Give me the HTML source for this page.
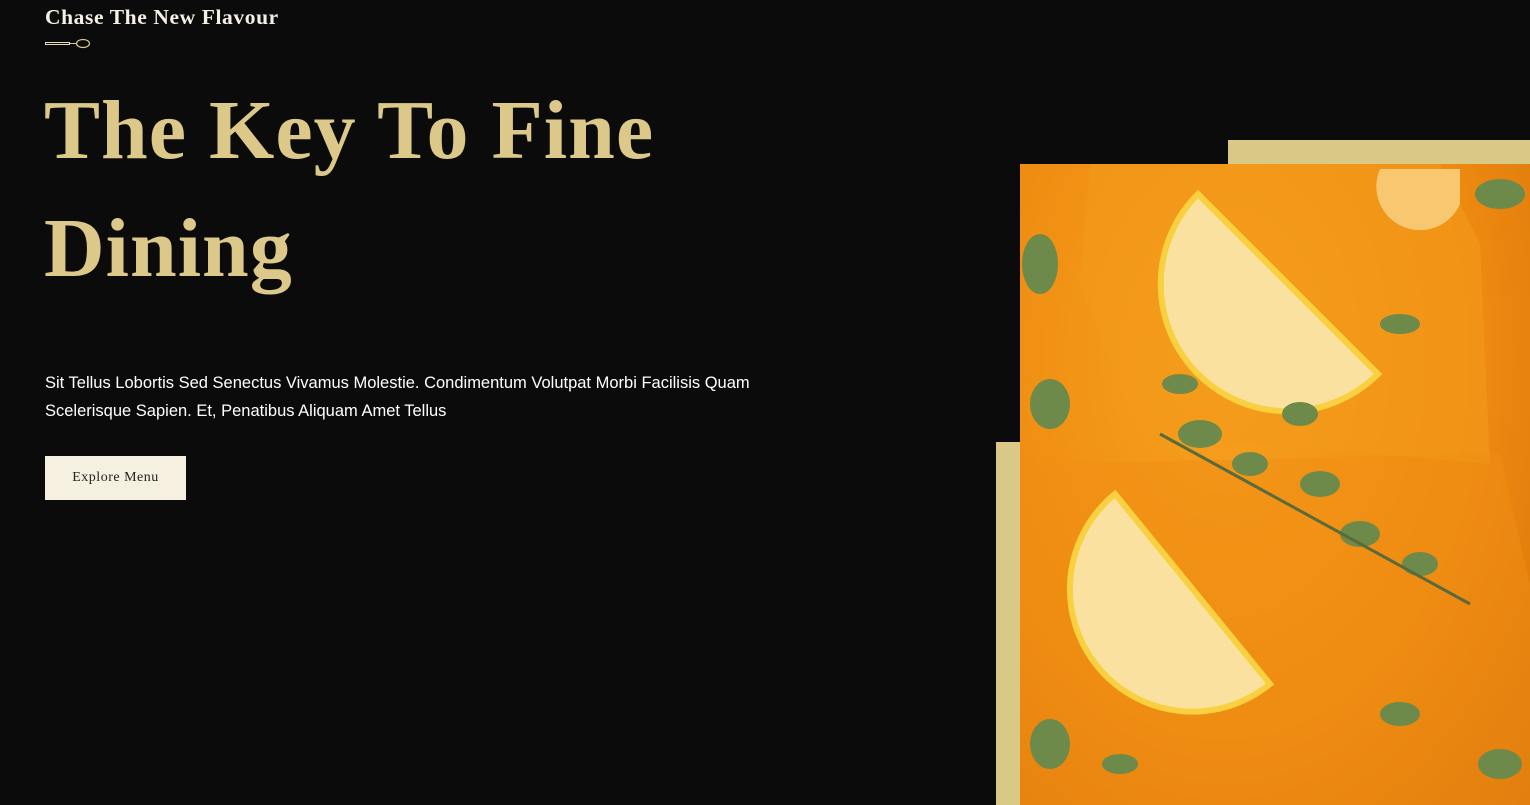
<!DOCTYPE html>
<html><head><meta charset="utf-8"><style>
*{margin:0;padding:0;box-sizing:border-box}
body{width:1530px;height:805px;background:#0b0b0b;overflow:hidden;position:relative;font-family:"Liberation Sans",sans-serif}
.sub{position:absolute;left:45px;top:5px;color:#f4f0e6;font-family:"Liberation Serif",serif;font-weight:bold;font-size:21.5px;letter-spacing:0.6px}
h1{position:absolute;left:44px;top:72px;color:#dcc98a;font-family:"Liberation Serif",serif;font-weight:bold;font-size:84px;line-height:118px;letter-spacing:1px}
p{position:absolute;left:45px;top:369px;width:790px;color:#fff;font-size:16.5px;line-height:28px}
.btn{position:absolute;left:45px;top:456px;width:141px;height:44px;background:#f6f0e0;color:#222;font-family:"Liberation Serif",serif;font-size:14px;text-align:center;line-height:44px;letter-spacing:0.5px}
.bar1{position:absolute;left:1228px;top:140px;width:302px;height:24px;background:#d9c886}
.bar2{position:absolute;left:996px;top:442px;width:24px;height:363px;background:#d9c886}
.img{position:absolute;left:1020px;top:164px;width:510px;height:641px;overflow:hidden;background:radial-gradient(ellipse at 40% 30%,#f7a21f,#ee8a10 60%,#d4700a)}
</style></head><body>
<div class="sub">Chase The New Flavour</div>
<svg style="position:absolute;left:45px;top:38px" width="46" height="12"><rect x="0.5" y="4.5" width="24" height="2" fill="none" stroke="#e6dcc0" stroke-width="1"/><line x1="25" y1="5.5" x2="31" y2="5.5" stroke="#d9c886"/><ellipse cx="38" cy="5.5" rx="6.5" ry="4" fill="none" stroke="#d9c886" stroke-width="1.2"/></svg>
<h1>The Key To Fine<br>Dining</h1>
<p>Sit Tellus Lobortis Sed Senectus Vivamus Molestie. Condimentum Volutpat Morbi Facilisis Quam Scelerisque Sapien. Et, Penatibus Aliquam Amet Tellus</p>
<div class="btn">Explore Menu</div>
<div class="bar1"></div><div class="bar2"></div>
<div class="img">
<svg width="510" height="641">
<path d="M70 0 L420 0 L460 80 L470 300 L120 270 L60 120Z" fill="#f39a1a" opacity="0.6"/>
<path d="M0 300 L480 290 L510 420 L510 641 L0 641Z" fill="#f08d14" opacity="0.5"/>
<path d="M178 30 A95 95 0 0 0 358 210 Z" fill="#fbe1a0" stroke="#f8d040" stroke-width="6"/>
<path d="M95 330 A95 95 0 0 0 250 520 Z" fill="#fbe1a0" stroke="#f8d040" stroke-width="6"/>
<path d="M360 5 A40 40 0 0 0 440 40 L440 5Z" fill="#f7c870"/>
<g fill="#6d8a4a">
<ellipse cx="180" cy="270" rx="22" ry="14"/><ellipse cx="230" cy="300" rx="18" ry="12"/><ellipse cx="280" cy="250" rx="18" ry="12"/>
<ellipse cx="300" cy="320" rx="20" ry="13"/><ellipse cx="340" cy="370" rx="20" ry="13"/><ellipse cx="400" cy="400" rx="18" ry="12"/>
<ellipse cx="380" cy="160" rx="20" ry="10"/><ellipse cx="20" cy="100" rx="18" ry="30"/><ellipse cx="30" cy="240" rx="20" ry="25"/>
<ellipse cx="480" cy="30" rx="25" ry="15"/><ellipse cx="160" cy="220" rx="18" ry="10"/><ellipse cx="30" cy="580" rx="20" ry="25"/>
<ellipse cx="380" cy="550" rx="20" ry="12"/><ellipse cx="480" cy="600" rx="22" ry="15"/><ellipse cx="100" cy="600" rx="18" ry="10"/>
</g>
<path d="M140 270 L450 440" stroke="#5a6a3a" stroke-width="3"/>
</svg>
</div>
</body></html>
